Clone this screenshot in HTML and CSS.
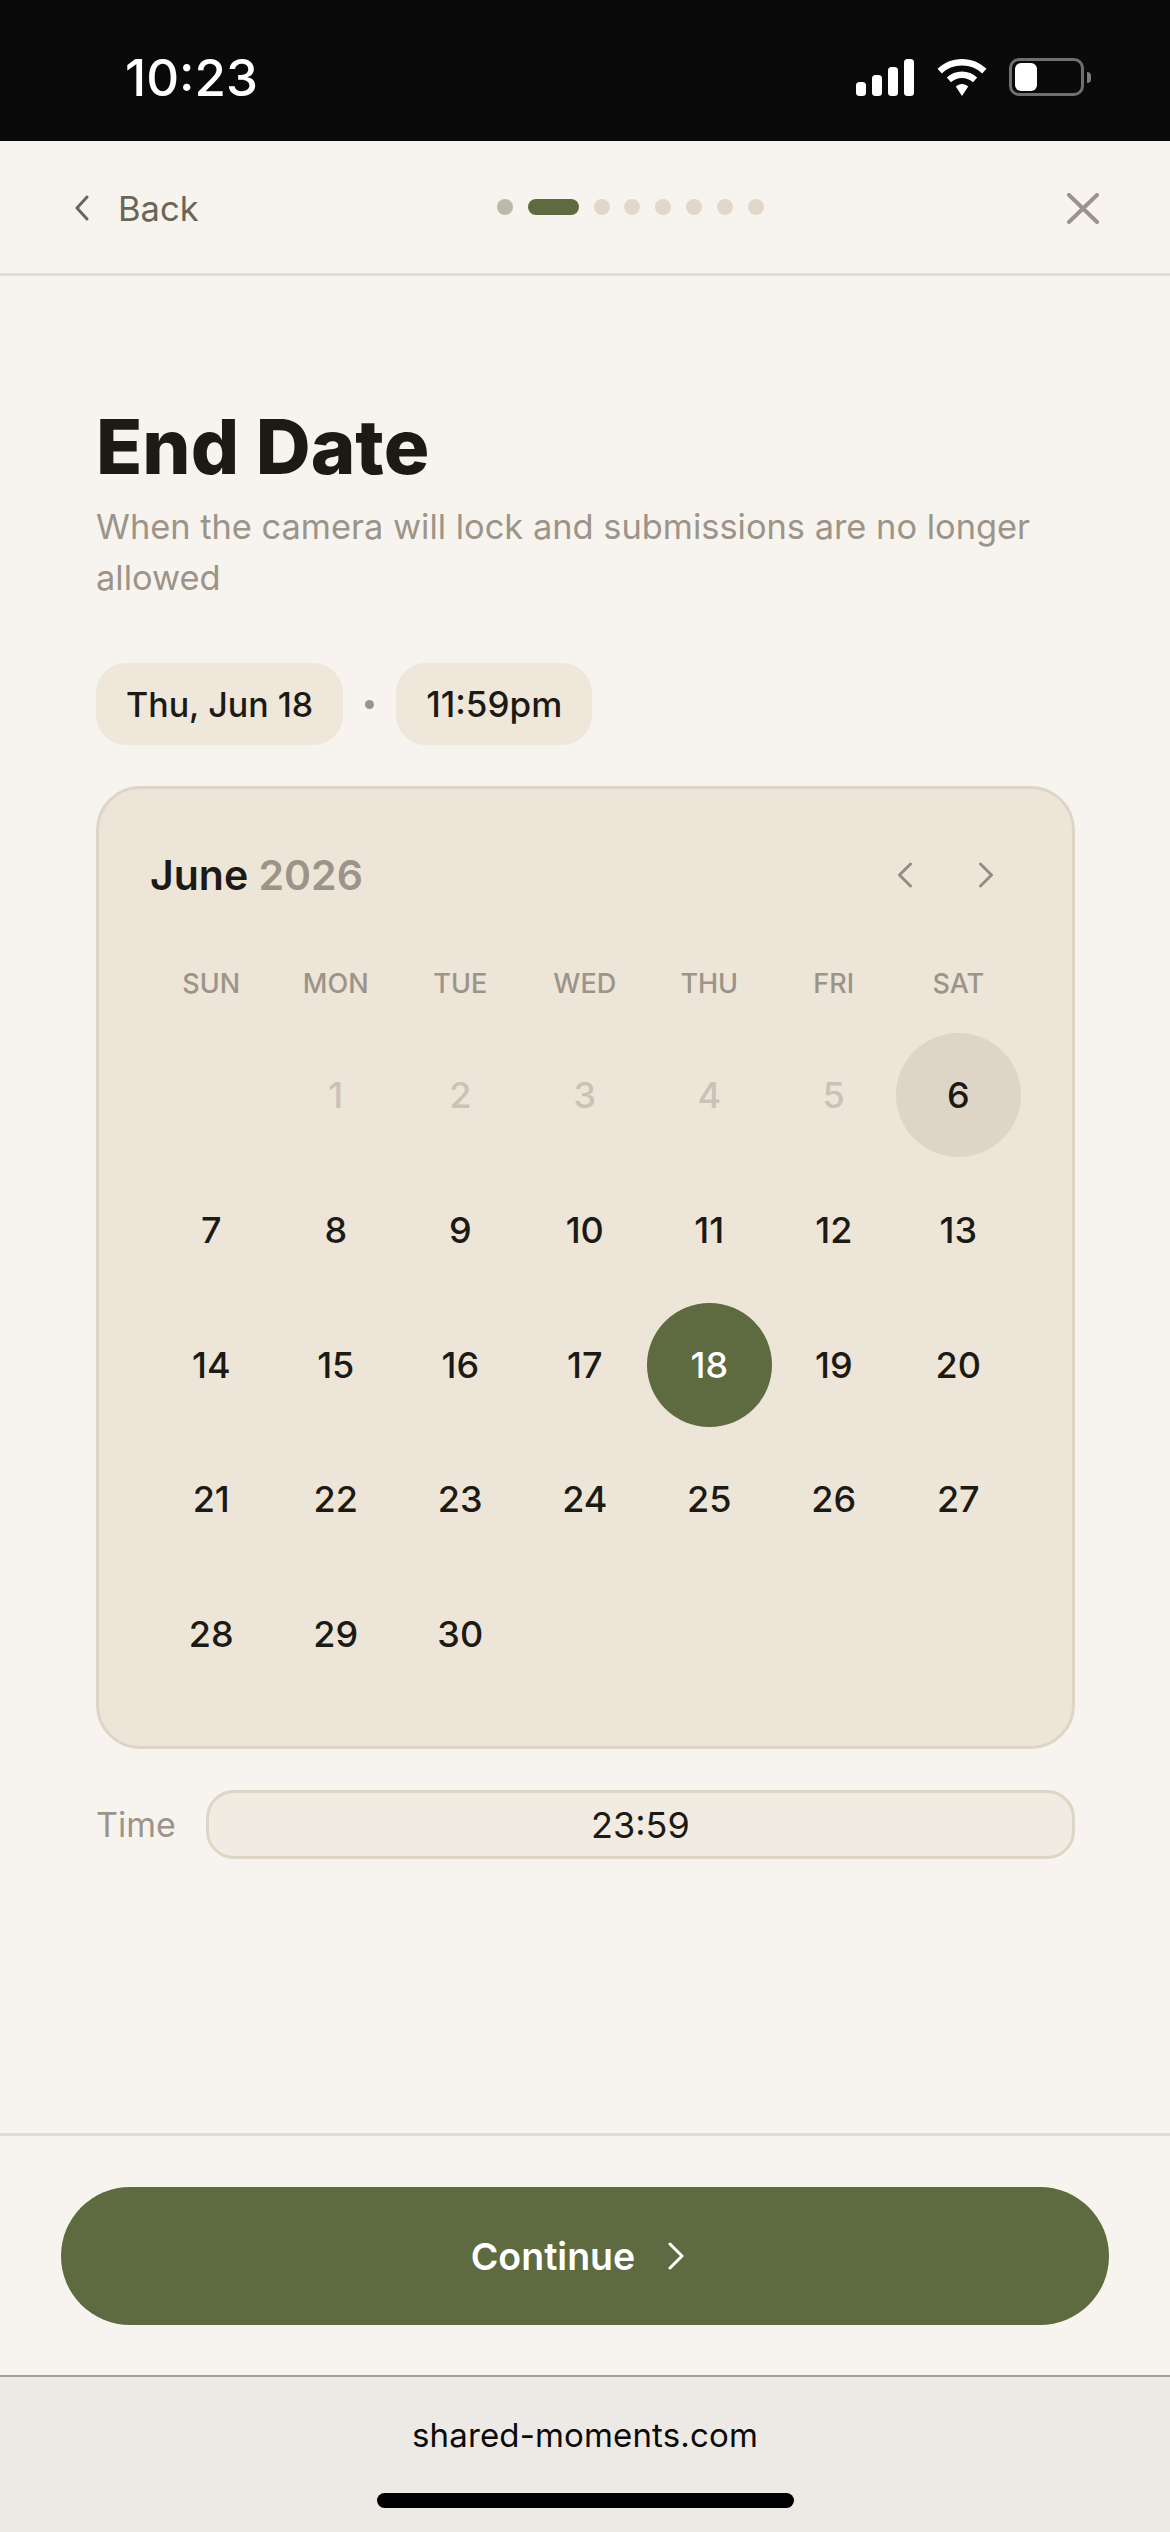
FILE: index.html
```html
<!DOCTYPE html>
<html lang="en">
<head>
  <meta charset="UTF-8">
  <title>End Date</title>
  <link rel="stylesheet" href="styles.css">
</head>
<body>
  <div class="status-bar">
    <span class="clock">10:23</span>
    <div class="status-icons">
      <svg class="signal" width="58" height="37" viewBox="0 0 58 37" fill="#fff">
        <rect x="0" y="23" width="10" height="14" rx="3.5"/>
        <rect x="16" y="16" width="10" height="21" rx="3.5"/>
        <rect x="32" y="8" width="10" height="29" rx="3.5"/>
        <rect x="48" y="0" width="10" height="37" rx="3.5"/>
      </svg>
      <svg class="wifi" width="50" height="37" viewBox="0 0 50 37" fill="#fff">
        <path d="M25 0C15.500 0 7 3.700 0.500 9.800L4.800 14.500C10 9.500 17 6.600 25 6.600C33 6.600 40 9.500 45.200 14.500L49.500 9.800C43 3.700 34.500 0 25 0Z"/>
        <path d="M25 12.500C19.200 12.500 13.900 14.800 9.800 18.600L14 23.200C16.900 20.500 20.700 18.900 25 18.900C29.300 18.900 33.100 20.500 36 23.200L40.200 18.600C36.100 14.800 30.800 12.500 25 12.500Z"/>
        <path d="M25 25C22.700 25 20.500 25.900 18.800 27.400L25 37L31.200 27.400C29.500 25.900 27.300 25 25 25Z"/>
      </svg>
      <div class="battery">
        <div class="battery-body"><div class="battery-fill"></div></div>
        <div class="battery-cap"></div>
      </div>
    </div>
  </div>

  <header class="top-nav">
    <div class="back">
      <svg width="16" height="26" viewBox="0 0 16 26" fill="none" stroke="#6b6458" stroke-width="3" stroke-linecap="round" stroke-linejoin="round"><path d="M13 2 3 13l10 11"/></svg>
      <span>Back</span>
    </div>
    <div class="steps">
      <span class="step done"></span>
      <span class="step active"></span>
      <span class="step"></span>
      <span class="step"></span>
      <span class="step"></span>
      <span class="step"></span>
      <span class="step"></span>
      <span class="step"></span>
    </div>
    <svg class="close" width="32" height="31" viewBox="0 0 32 31" fill="none" stroke="#9c9489" stroke-width="4" stroke-linecap="round"><path d="M2 2 30 29M30 2 2 29"/></svg>
  </header>

  <main class="content">
    <h1>End Date</h1>
    <p class="subtitle">When the camera will lock and submissions are no longer allowed</p>

    <div class="chips">
      <span class="chip">Thu, Jun 18</span>
      <span class="chip-dot"></span>
      <span class="chip chip-time">11:59pm</span>
    </div>

    <section class="calendar">
      <div class="cal-head">
        <div class="cal-month">June <span>2026</span></div>
        <div class="cal-arrows">
          <svg width="16" height="26" viewBox="0 0 16 26" fill="none" stroke="#958d82" stroke-width="3" stroke-linecap="round" stroke-linejoin="round"><path d="M13.500 2 2.500 13l11 11"/></svg>
          <svg width="16" height="26" viewBox="0 0 16 26" fill="none" stroke="#958d82" stroke-width="3" stroke-linecap="round" stroke-linejoin="round"><path d="M2.500 2l11 11-11 11"/></svg>
        </div>
      </div>
      <div class="cal-week">
        <span>SUN</span><span>MON</span><span>TUE</span><span>WED</span><span>THU</span><span>FRI</span><span>SAT</span>
      </div>
      <div class="cal-days">
        <span class="day"></span>
        <span class="day off">1</span>
        <span class="day off">2</span>
        <span class="day off">3</span>
        <span class="day off">4</span>
        <span class="day off">5</span>
        <span class="day today">6</span>
        <span class="day">7</span>
        <span class="day">8</span>
        <span class="day">9</span>
        <span class="day">10</span>
        <span class="day">11</span>
        <span class="day">12</span>
        <span class="day">13</span>
        <span class="day">14</span>
        <span class="day">15</span>
        <span class="day">16</span>
        <span class="day">17</span>
        <span class="day selected">18</span>
        <span class="day">19</span>
        <span class="day">20</span>
        <span class="day">21</span>
        <span class="day">22</span>
        <span class="day">23</span>
        <span class="day">24</span>
        <span class="day">25</span>
        <span class="day">26</span>
        <span class="day">27</span>
        <span class="day">28</span>
        <span class="day">29</span>
        <span class="day">30</span>
      </div>
    </section>

    <div class="time-row">
      <span class="time-label">Time</span>
      <div class="time-input">23:59</div>
    </div>
  </main>

  <div class="footer">
    <button class="continue">
      <span>Continue</span>
      <svg width="18" height="28" viewBox="0 0 18 28" fill="none" stroke="#fff" stroke-width="3" stroke-linecap="round" stroke-linejoin="round"><path d="M3 2l12 12L3 26"/></svg>
    </button>
  </div>

  <div class="browser-bar">
    <div class="url">shared-moments.com</div>
    <div class="home-bar"></div>
  </div>
</body>
</html>
```

FILE: styles.css
```css
* {
  box-sizing: border-box;
}
html, body {
  margin: 0;
  height: 2532px;
}
body {
  display: flex;
  flex-direction: column;
  font-family: Inter, "Liberation Sans", sans-serif;
  background: #f7f4ef;
  color: #1c1a15;
  overflow: hidden;
}

/* status bar */
.status-bar {
  height: 141px;
  background: #0a0a0a;
  color: #fff;
  display: flex;
  justify-content: space-between;
  align-items: flex-start;
  padding: 58px 79px 0 125px;
}
.clock {
  font-size: 51px;
  font-weight: 500;
  line-height: 40px;
}
.status-icons {
  display: flex;
  align-items: center;
  gap: 22px;
}
.signal {
  margin-right: 1px;
}
.battery {
  display: flex;
  align-items: center;
  gap: 3px;
}
.battery-body {
  width: 75px;
  height: 38px;
  border: 3px solid #6f6f6f;
  border-radius: 10px;
  padding: 2px 3px;
}
.battery-fill {
  width: 22px;
  height: 100%;
  background: #fff;
  border-radius: 6px;
}
.battery-cap {
  width: 4px;
  height: 11px;
  background: #7d7d7d;
  border-radius: 0 4px 4px 0;
}

/* top nav */
.top-nav {
  height: 135px;
  display: flex;
  align-items: center;
  justify-content: space-between;
  padding: 2px 71px 0 74px;
  border-bottom: 3px solid #e3dccf;
  position: relative;
}
.back {
  display: flex;
  align-items: center;
  gap: 28px;
  font-size: 34.500px;
  color: #6b6458;
}
.steps {
  position: absolute;
  left: 497px;
  top: 58px;
  display: flex;
  gap: 14.800px;
}
.step {
  width: 16px;
  height: 16px;
  border-radius: 50%;
  background: #e0d8c8;
}
.step.done {
  background: #b9bba6;
}
.step.active {
  width: 51px;
  border-radius: 8px;
  background: #5e6a3f;
}

/* main */
.content {
  flex: 1;
  padding: 130px 95px 0 96px;
}
h1 {
  margin: 0;
  font-size: 76px;
  font-weight: 800;
  line-height: 80px;
}
.subtitle {
  margin: 15px 0 0;
  font-size: 34.400px;
  line-height: 51px;
  color: #9c9489;
}
.chips {
  margin-top: 60px;
  display: flex;
  align-items: center;
  gap: 22px;
}
.chip {
  height: 82px;
  padding: 0 30px;
  display: flex;
  align-items: center;
  border-radius: 30px;
  background: #eee7da;
  font-size: 34px;
  font-weight: 500;
}
.chip-time {
  font-size: 35px;
}
.chip-dot {
  width: 9px;
  height: 9px;
  border-radius: 50%;
  background: #9c9489;
}

/* calendar */
.calendar {
  margin-top: 41px;
  height: 963px;
  padding: 58px 50px 0 50px;
  background: #ede5d8;
  border: 3px solid #ddd5c5;
  border-radius: 44px;
}
.cal-head {
  height: 56px;
  padding-right: 28px;
  padding-left: 1px;
  display: flex;
  align-items: center;
  justify-content: space-between;
}
.cal-month {
  font-size: 41px;
  font-weight: 600;
}
.cal-month span {
  color: #9c9489;
}
.cal-arrows {
  display: flex;
  gap: 65px;
}
.cal-week {
  margin-top: 64px;
  display: grid;
  grid-template-columns: repeat(7, 124.500px);
  text-align: center;
  font-size: 27px;
  font-weight: 500;
  line-height: 34px;
  color: #9c9489;
}
.cal-days {
  margin-top: 32px;
  display: grid;
  grid-template-columns: repeat(7, 124.500px);
  grid-auto-rows: 124px;
  row-gap: 10.800px;
}
.day {
  display: flex;
  align-items: center;
  justify-content: center;
  border-radius: 50%;
  font-size: 36px;
  font-weight: 500;
}
.day.off {
  color: #cac2b6;
}
.day.today {
  background: #ded5c6;
}
.day.selected {
  background: #5e6a3f;
  color: #fff;
}

/* time */
.time-row {
  margin-top: 41px;
  display: flex;
  align-items: center;
  gap: 30px;
}
.time-label {
  font-size: 34px;
  color: #9c9489;
}
.time-input {
  flex: 1;
  height: 69px;
  display: flex;
  align-items: center;
  justify-content: center;
  background: #f2ebe1;
  border: 3px solid #ddd5c5;
  border-radius: 28px;
  font-size: 36px;
}

/* footer */
.footer {
  height: 242px;
  padding: 51px 61px 0;
  border-top: 3px solid #e3dccf;
}
.continue {
  width: 100%;
  height: 138px;
  display: flex;
  align-items: center;
  justify-content: center;
  gap: 32px;
  padding: 0 14px 0 0;
  border: none;
  border-radius: 69px;
  background: #5e6a3f;
  color: #fff;
  font-family: inherit;
  font-size: 37.500px;
  font-weight: 600;
}

/* browser bar */
.browser-bar {
  height: 157px;
  background: #edeae6;
  border-top: 2px solid #a3a19d;
  display: flex;
  flex-direction: column;
  align-items: center;
  padding-top: 36px;
}
.url {
  font-size: 33px;
  line-height: 44px;
  color: #0a0a0a;
  letter-spacing: 0.150px;
}
.home-bar {
  margin-top: 36px;
  width: 417px;
  height: 15px;
  border-radius: 8px;
  background: #000;
}
```
